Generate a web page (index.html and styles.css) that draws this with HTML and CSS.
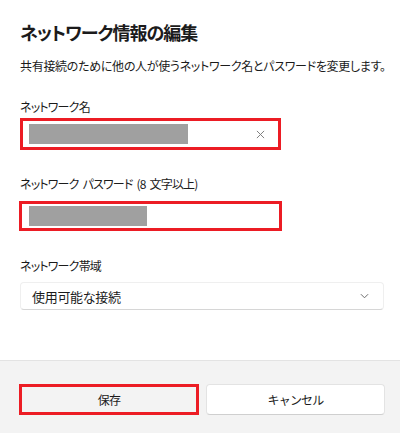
FILE: index.html
```html
<!DOCTYPE html>
<html lang="ja">
<head>
  <meta charset="UTF-8" />
  <title>ネットワーク情報の編集</title>
  <link rel="stylesheet" href="styles.css">
</head>
<body>
  <div class="dialog">
    <div class="content">
      <h1>ネットワーク情報の編集</h1>
      <p class="desc">共有接続のために他の人が使うネットワーク名とパスワードを変更します。</p>

      <div class="label label-name">ネットワーク名</div>
      <div class="field field-name">
        <span class="masked masked-name"></span>
        <svg class="clear-icon" width="9" height="9" viewBox="0 0 10 10">
          <path d="M1 1 L9 9 M9 1 L1 9" stroke="#808080" stroke-width="1.1" fill="none"/>
        </svg>
      </div>

      <div class="label label-pass">ネットワーク パスワード (8 文字以上)</div>
      <div class="field field-pass">
        <span class="masked masked-pass"></span>
      </div>

      <div class="label label-band">ネットワーク帯域</div>
      <div class="select">
        <span>使用可能な接続</span>
        <svg class="chevron" width="9" height="6" viewBox="0 0 10 6">
          <path d="M1 1 L5 5 L9 1" stroke="#6a6a6a" stroke-width="1.1" fill="none"/>
        </svg>
      </div>
    </div>

    <div class="footer">
      <button class="btn btn-save">保存</button>
      <button class="btn btn-cancel">キャンセル</button>
    </div>
  </div>
</body>
</html>
```

FILE: styles.css
```css
body {
  margin: 0;
  background-color: #ffffff;
  font-family: "Noto Sans CJK JP", "Noto Sans", sans-serif;
  font-feature-settings: "palt";
  color: #1b1b1b;
}

.dialog {
  width: 400px;
  height: 433px;
  display: flex;
  flex-direction: column;
}

.content {
  height: 360px;
  padding: 18px 10px 0 20px;
  box-sizing: border-box;
}

h1 {
  margin: 0;
  font-size: 18px;
  line-height: 28px;
  font-weight: 600;
  letter-spacing: -1px;
}

.desc {
  margin: 10px 0 0;
  font-size: 12px;
  line-height: 20px;
  letter-spacing: -0.3px;
  white-space: nowrap;
}

.label {
  font-size: 12px;
  line-height: 20px;
  letter-spacing: -0.8px;
}

.label-name {
  margin-top: 21px;
}

.label-pass {
  margin-top: 24px;
  word-spacing: 2px;
}

.label-band {
  margin-top: 25px;
}

.field {
  display: flex;
  align-items: center;
  background-color: #fff;
  border: 3px solid #ec1c24;
  box-sizing: border-box;
  padding-left: 6px;
}

.field-name {
  margin-top: 1px;
  width: 261px;
  height: 32px;
}

.field-pass {
  margin-top: 7px;
  margin-left: -1px;
  width: 263px;
  height: 30px;
  padding-left: 7px;
}

.masked {
  display: block;
  background-color: #a0a0a0;
  height: 20px;
}

.masked-name {
  width: 159px;
}

.masked-pass {
  width: 118px;
}

.clear-icon {
  margin-left: auto;
  margin-right: 13px;
}

.select {
  margin-top: 6px;
  width: 364px;
  height: 28px;
  box-sizing: border-box;
  display: flex;
  align-items: center;
  padding: 0 14px 0 11px;
  border: 1px solid #efefef;
  border-bottom-color: #d6d6d6;
  border-radius: 4px;
  font-size: 13px;
  letter-spacing: -0.3px;
}

.chevron {
  margin-left: auto;
}

.footer {
  flex: 1;
  background-color: #f3f3f3;
  border-top: 1px solid #e3e3e3;
  display: flex;
  gap: 7px;
  padding: 23px 15px 0 19px;
}

.btn {
  height: 31px;
  font-family: inherit;
  font-size: 12px;
  color: #1b1b1b;
  cursor: pointer;
  box-sizing: border-box;
  letter-spacing: -0.8px;
}

.btn-save {
  width: 180px;
  background-color: #f3f3f3;
  border: 3px solid #ec1c24;
}

.btn-cancel {
  width: 179px;
  background-color: #ffffff;
  border: 1px solid #e3e3e3;
  border-bottom-color: #cfcfcf;
  border-radius: 4px;
}
```
